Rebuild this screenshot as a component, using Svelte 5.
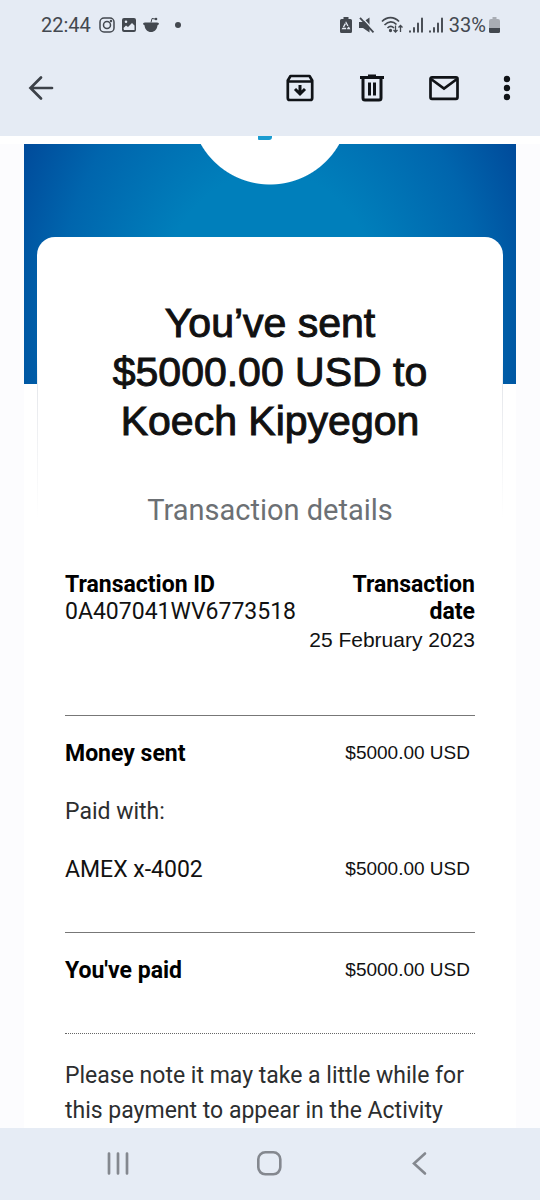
<script>
    let time = "22:44";
    let battery = "33%";
    let amount = "$5000.00 USD";

    let paid = [
        { label: "Money sent", strong: true, value: amount },
        { label: "Paid with:", soft: true, value: "" },
        { label: "AMEX x-4002", value: amount },
    ];
</script>

<div class="screen">
    <header>
        <div class="status">
            <div class="group">
                <span class="clock">{time}</span>
                <svg width="16" height="16" viewBox="0 0 16 16" fill="none" stroke="currentColor" stroke-width="1.500">
                    <rect x="1" y="1" width="14" height="14" rx="4" />
                    <circle cx="8" cy="8" r="3.500" />
                    <circle cx="12" cy="4" r="0.500" />
                </svg>
                <svg width="16" height="16" viewBox="0 0 16 16">
                    <path
                        fill="currentColor"
                        fill-rule="evenodd"
                        d="M3 1h10a2 2 0 0 1 2 2v10a2 2 0 0 1-2 2H3a2 2 0 0 1-2-2V3a2 2 0 0 1 2-2zM3 13h10.500V8.500l-2.500-2.500-4 4-2-1.500-2.500 2.500zM5 3.500a1.300 1.300 0 1 0 0 2.600 1.300 1.300 0 0 0 0-2.600z"
                    />
                </svg>
                <svg width="16" height="16" viewBox="0 0 16 16">
                    <path fill="currentColor" d="M0 6.500Q1 5 3 5.500h10q2-.5 3 1-.3 1.500-1.500 1.700C14 12.500 11.500 15 8 15S2 12.500 1.500 8.200Q.3 8 0 6.500z" />
                    <path fill="none" stroke="currentColor" d="M8 5.500l1-4 3 .5" />
                    <circle cx="13" cy="2" r="1.300" fill="currentColor" />
                </svg>
                <svg width="22" height="16" viewBox="0 0 22 16">
                    <circle cx="13" cy="8" r="3" fill="currentColor" />
                </svg>
            </div>
            <div class="group">
                <svg width="12" height="16" viewBox="0 0 12 16">
                    <path fill="currentColor" d="M3.500 0h5v2h2A1.500 1.500 0 0 1 12 3.500v11a1.500 1.500 0 0 1-1.500 1.500h-9A1.500 1.500 0 0 1 0 14.500v-11A1.500 1.500 0 0 1 1.500 2h2z" />
                    <path fill="none" stroke="#e5ebf4" stroke-width="1.300" stroke-dasharray="4 1" d="M6 5.500l3.300 6H2.700z" />
                </svg>
                <svg width="17" height="16" viewBox="0 0 17 16">
                    <path fill="currentColor" d="M1 5h4l6.500-4.500v15L5 11H1z" />
                    <path stroke="#e5ebf4" stroke-width="1.500" d="M3.500 0l13 14" />
                    <path stroke="currentColor" stroke-width="1.800" d="M2 .8l13.500 14.500" />
                </svg>
                <svg width="22" height="18" viewBox="0 0 22 18" fill="none" stroke="currentColor" stroke-width="1.700">
                    <path d="M1 5.500C6 .3 13 .3 18 5.500M3.500 9c4-4 8.500-4 12-.5M6.500 12c2-2 4.500-2 6.500 0" />
                    <circle cx="9.500" cy="14.500" r="0.800" fill="currentColor" />
                    <path d="M14.500 9.500v6M12.500 14l2 2 2-2M19.500 16v-6M17.500 11.500l2-2 2 2" stroke-width="1.300" />
                </svg>
                {#each [1, 2] as sim (sim)}
                    <svg width="14" height="16" viewBox="0 0 14 16" fill="none" stroke="currentColor" stroke-width="1.900" stroke-linecap="round">
                        <path d="M1 14.300v.4M5 11v3.700M9 6.500v8.200M13 1.500v13.200" />
                    </svg>
                {/each}
                <span class="charge">
                    {battery}
                    <svg width="11" height="16" viewBox="0 0 11 16">
                        <path fill="#a9adb4" d="M3.500 0h4v2H9a2 2 0 0 1 2 2v8H0V4a2 2 0 0 1 2-2h1.500z" />
                        <path fill="currentColor" d="M0 11h11v3.500A1.500 1.500 0 0 1 9.500 16h-8A1.500 1.500 0 0 1 0 14.500z" />
                    </svg>
                </span>
            </div>
        </div>

        <div class="toolbar">
            <button class="back" aria-label="Back">
                <svg width="28" height="28" viewBox="0 0 28 28" fill="none" stroke="currentColor" stroke-width="2.700" stroke-linecap="round">
                    <path d="M24 14H3M13 3.500L2.500 14 13 24.500" />
                </svg>
            </button>
            <div class="actions">
                <button aria-label="Archive">
                    <svg width="28" height="28" viewBox="0 0 28 28" fill="none" stroke="currentColor" stroke-width="2.700">
                        <path d="M1.800 6.500L4.500 2h19l2.700 4.500V24a2 2 0 0 1-2 2H3.800a2 2 0 0 1-2-2zM2 7.500h24" stroke-linejoin="round" />
                        <path d="M14 11v9M9 15l5 5 5-5" stroke-width="3" />
                    </svg>
                </button>
                <button aria-label="Delete">
                    <svg width="28" height="28" viewBox="0 0 28 28" fill="none" stroke="currentColor" stroke-width="3">
                        <path d="M2 3.500h24M10 2h8M5 4v20a2 2 0 0 0 2 2h14a2 2 0 0 0 2-2V4M11.500 8.500v13M16.500 8.500v13" />
                    </svg>
                </button>
                <button aria-label="Mark as unread">
                    <svg width="32" height="28" viewBox="0 0 32 28" fill="none" stroke="currentColor" stroke-width="2.700">
                        <rect x="2.500" y="3.300" width="27" height="21.500" rx="1.500" />
                        <path d="M3 5l13 9.500L29 5" />
                    </svg>
                </button>
                <button class="more" aria-label="More options">
                    <svg width="8" height="28" viewBox="0 0 8 28" fill="currentColor">
                        <circle cx="4" cy="5" r="3.200" />
                        <circle cx="4" cy="14" r="3.200" />
                        <circle cx="4" cy="23" r="3.200" />
                    </svg>
                </button>
            </div>
        </div>
    </header>

    <main>
        <article>
            <div class="banner">
                <div class="logo"><span></span></div>
            </div>
            <section class="card">
                <h1>You’ve sent<br />{amount} to<br />Koech Kipyegon</h1>
                <h2>Transaction details</h2>

                <div class="meta">
                    <div>
                        <strong>Transaction ID</strong>
                        <p>0A407041WV6773518</p>
                    </div>
                    <div class="when">
                        <strong>Transaction<br />date</strong>
                        <p class="date">25 February 2023</p>
                    </div>
                </div>

                <hr />
                <table>
                    <tbody>
                        {#each paid as row (row.label)}
                            <tr>
                                <th class:strong={row.strong} class:soft={row.soft} scope="row">{row.label}</th>
                                <td>{row.value}</td>
                            </tr>
                        {/each}
                    </tbody>
                </table>
                <hr />
                <table>
                    <tbody>
                        <tr>
                            <th class="strong" scope="row">You've paid</th>
                            <td>{amount}</td>
                        </tr>
                    </tbody>
                </table>
                <hr class="dotted" />

                <p class="note">Please note it may take a little while for this payment to appear in the Activity</p>
            </section>
        </article>
    </main>

    <nav>
        <button aria-label="Recent apps">
            <svg width="26" height="26" viewBox="0 0 26 26" stroke="currentColor" stroke-width="2.700" stroke-linecap="round">
                <path d="M4 2.500v20M13 2.500v20M22 2.500v20" />
            </svg>
        </button>
        <button aria-label="Home">
            <svg width="26" height="26" viewBox="0 0 26 26" fill="none" stroke="currentColor" stroke-width="2.600">
                <rect x="1.300" y="1.300" width="22" height="22" rx="7" />
            </svg>
        </button>
        <button aria-label="Back">
            <svg width="26" height="26" viewBox="0 0 26 26" fill="none" stroke="currentColor" stroke-width="2.600" stroke-linecap="round">
                <path d="M16 2.500L5 12.500l11 10" />
            </svg>
        </button>
    </nav>
</div>

<style>
    :global(body) {
        margin: 0;
        background-color: #fcfcfe;
    }

    .screen {
        display: flex;
        flex-direction: column;
        height: 100vh;
        font-family: Roboto, "Liberation Sans", sans-serif;
        font-size: 23px;
        color: #111;
    }

    header {
        flex: none;
        padding-bottom: 10px;
        background-color: #e5ebf4;
    }

    svg {
        display: block;
        flex: none;
    }

    .status {
        display: flex;
        justify-content: space-between;
        align-items: center;
        height: 50px;
        padding: 0 40px 0 41px;
        color: #43484f;
        font-size: 20px;
    }

    .group {
        display: flex;
        align-items: center;
        gap: 6px;
    }

    .clock {
        margin-right: 2px;
    }

    .charge {
        display: flex;
        align-items: center;
        gap: 3px;
    }

    .toolbar {
        display: flex;
        justify-content: space-between;
        align-items: center;
        height: 76px;
        padding: 0 18px;
    }

    .actions {
        display: flex;
        gap: 24px;
    }

    button {
        display: flex;
        align-items: center;
        justify-content: center;
        width: 48px;
        height: 48px;
        padding: 0;
        border: none;
        background: none;
        color: #101317;
        cursor: pointer;
    }

    .back {
        color: #3c4148;
    }

    .more {
        width: 30px;
    }

    main {
        flex: 1;
        min-height: 0;
        overflow-y: auto;
        scrollbar-width: none;
        padding: 8px 24px 0;
        background: linear-gradient(#fff 8px, #fcfcfe 8px);
    }

    article {
        background-color: #fff;
    }

    .banner {
        position: relative;
        height: 240px;
        background: radial-gradient(ellipse 290px 380px at 50% 75%, #007fbb 0%, #007fbb 40%, #0065ad 74%, #004798 100%);
    }

    /* white disc behind the logo, mostly scrolled out of view */
    .logo {
        position: absolute;
        top: -8px;
        left: 50%;
        width: 160px;
        height: 49px;
        margin-left: -80px;
        background: radial-gradient(circle 80px at 50% -31px, #fff 79px, transparent 80px);
    }

    .logo span {
        display: block;
        width: 14px;
        height: 4px;
        margin-left: 68px;
        border-radius: 0 0 3px 1px;
        background-color: #1a9bd0;
    }

    .card {
        position: relative;
        margin: -147px 13px 0;
        padding: 62px 28px 0;
        border-radius: 18px 18px 0 0;
        background:
            linear-gradient(transparent 120px, #e6e8ec 150px, transparent 280px) left top / 1px 280px no-repeat,
            linear-gradient(transparent 120px, #e6e8ec 150px, transparent 280px) right top / 1px 280px no-repeat,
            #fff;
    }

    h1,
    h2,
    p {
        margin: 0;
        font-weight: 400;
    }

    h1 {
        font-family: "Liberation Sans", Arial, sans-serif;
        font-size: 41px;
        line-height: 49px;
        text-align: center;
        -webkit-text-stroke: 1px #111;
    }

    h2 {
        margin-top: 46px;
        font-size: 29px;
        line-height: 36px;
        text-align: center;
        color: #6c7074;
    }

    .meta {
        display: flex;
        justify-content: space-between;
        margin: 43px 0 60px;
        line-height: 27px;
    }

    strong,
    .strong {
        font-weight: 700;
        color: #000;
    }

    .when {
        text-align: right;
    }

    .date {
        font-family: "Liberation Sans", Arial, sans-serif;
        font-size: 21px;
        line-height: 30px;
        white-space: nowrap;
    }

    hr {
        margin: 0;
        border: none;
        border-top: 1px solid #777;
    }

    .dotted {
        border-top: 1px dotted #666;
    }

    table {
        width: 100%;
        margin: 8px 0 34px;
        border-collapse: collapse;
    }

    th,
    td {
        height: 58px;
        padding: 0;
        vertical-align: middle;
    }

    th {
        font-weight: 400;
        text-align: left;
    }

    th.strong {
        font-weight: 700;
    }

    .soft,
    .note {
        color: #2c2e2f;
    }

    td {
        padding-right: 5px;
        font-family: "Liberation Sans", Arial, sans-serif;
        font-size: 19px;
        text-align: right;
    }

    .note {
        margin-top: 24px;
        line-height: 35px;
    }

    nav {
        display: flex;
        flex: none;
        justify-content: space-between;
        align-items: center;
        height: 72px;
        padding: 0 94px;
        background-color: #e6ecf5;
    }

    nav button {
        color: #84888f;
    }
</style>
